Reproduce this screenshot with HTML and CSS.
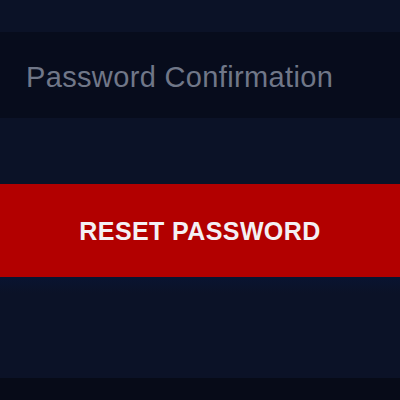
FILE: index.html
```html
<!DOCTYPE html>
<html>
<head>
<meta charset="utf-8">
<link rel="stylesheet" href="styles.css">
</head>
<body>
<div class="page">
  <div class="top-gap"></div>
  <div class="field"><span class="placeholder">Password Confirmation</span></div>
  <div class="mid-gap"></div>
  <button class="reset-btn">RESET PASSWORD</button>
  <div class="bottom-gap"></div>
  <div class="footer-strip"></div>
</div>
</body>
</html>
```
FILE: styles.css
```css
html, body {
  margin: 0;
  padding: 0;
  background: #0b1227;
}
.page {
  width: 400px;
  height: 400px;
  display: flex;
  flex-direction: column;
  font-family: "Liberation Sans", Arial, sans-serif;
}
.top-gap {
  height: 32px;
}
.field {
  height: 86px;
  background: #070c1c;
  display: flex;
  align-items: center;
  padding-left: 26px;
  box-sizing: border-box;
}
.placeholder {
  color: #707788;
  font-size: 29px;
  letter-spacing: 0.35px;
  margin-top: 4px;
}
.mid-gap {
  height: 66px;
}
.reset-btn {
  height: 93px;
  border: none;
  margin: 0;
  background: #b20000;
  color: #f4f0f4;
  font-family: "Liberation Sans", Arial, sans-serif;
  font-weight: bold;
  font-size: 25px;
  letter-spacing: 0.4px;
  padding: 2px 0 0 0;
  width: 400px;
  text-align: center;
}
.bottom-gap {
  height: 101px;
  background: linear-gradient(#091431 0px, #0b1227 16px, #0b1227 100%);
}
.footer-strip {
  flex: 1;
  background: #070b18;
}
```
